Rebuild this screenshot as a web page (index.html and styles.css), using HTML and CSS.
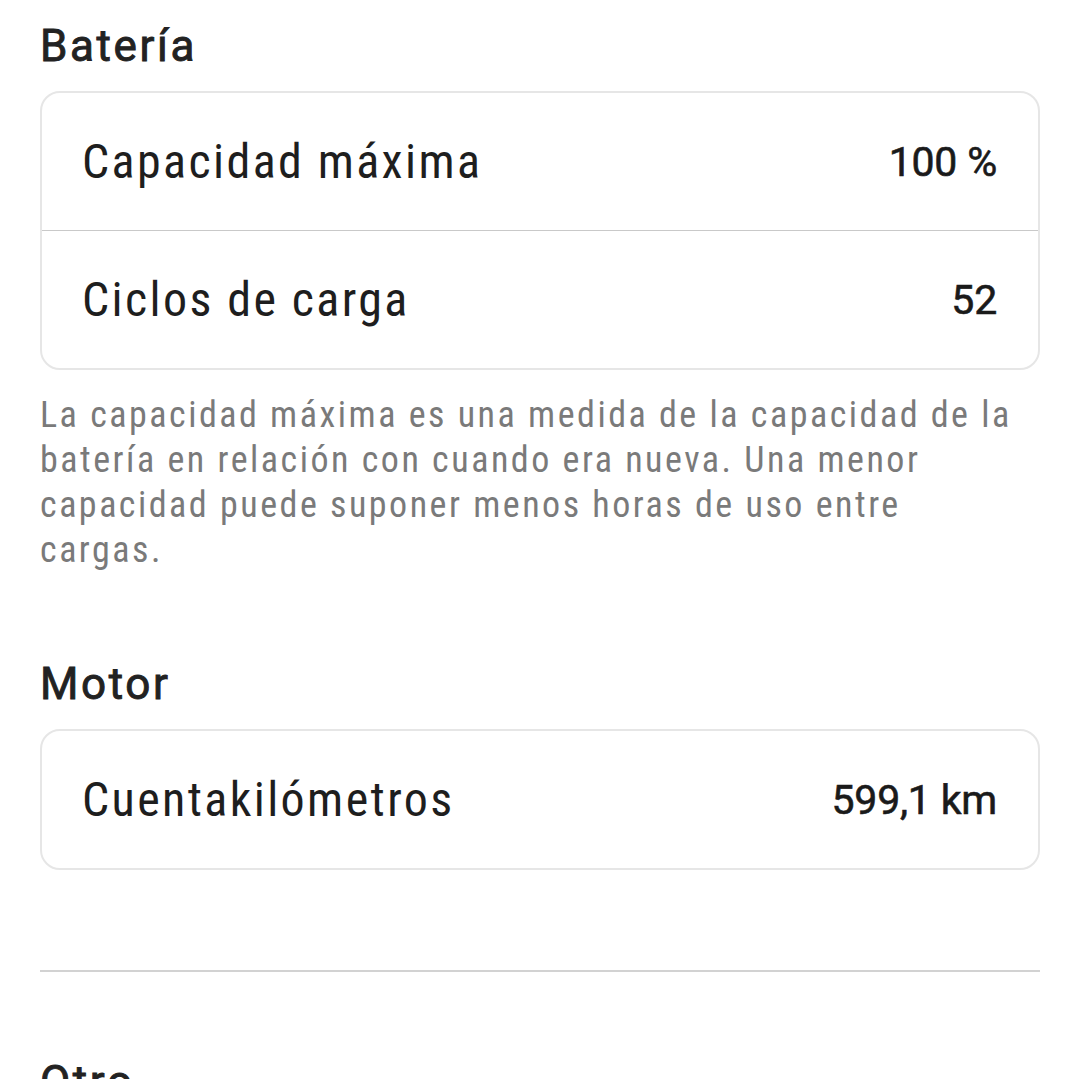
FILE: index.html
```html
<!DOCTYPE html>
<html lang="es">
<head>
    <meta charset="UTF-8">
    <meta name="viewport" content="width=device-width, initial-scale=1.0">
    <title>Información del dispositivo</title>
    <link rel="stylesheet" href="styles.css">
</head>
<body>
    <main class="page">
        <section class="group">
            <h2 class="group-title">Batería</h2>
            <div class="card">
                <div class="row">
                    <span class="label">Capacidad máxima</span>
                    <span class="value">100 %</span>
                </div>
                <div class="row">
                    <span class="label">Ciclos de carga</span>
                    <span class="value">52</span>
                </div>
            </div>
            <p class="note">La capacidad máxima es una medida de la capacidad de la batería en relación con cuando era nueva. Una menor capacidad puede suponer menos horas de uso entre cargas.</p>
        </section>

        <section class="group group-motor">
            <h2 class="group-title">Motor</h2>
            <div class="card">
                <div class="row">
                    <span class="label">Cuentakilómetros</span>
                    <span class="value">599,1 km</span>
                </div>
            </div>
        </section>

        <hr class="separator">

        <section class="group">
            <h2 class="group-title">Otro</h2>
        </section>
    </main>
</body>
</html>
```

FILE: styles.css
```css
body {
    margin: 0;
    padding: 0;
    background: #fff;
    color: #1e1e1e;
    font-family: "Roboto Condensed", Roboto, sans-serif;
}

.page {
    padding: 20px 40px 0;
}

/* medium weight isn't installed, a thin stroke thickens the regular face */
.group-title {
    margin: 0;
    font-family: Roboto, sans-serif;
    font-size: 44px;
    line-height: 53px;
    font-weight: 400;
    color: #222;
    letter-spacing: 2.6px;
    -webkit-text-stroke: 0.9px #222;
}

.card {
    margin-top: 18px;
    border: 2px solid #e6e6e6;
    border-radius: 20px;
}

.row {
    display: flex;
    align-items: center;
    justify-content: space-between;
    height: 137px;
    padding: 0 41px 0 40px;
}

.row + .row {
    border-top: 1px solid #c9c9c9;
}

.label {
    font-size: 48px;
    letter-spacing: 2.4px;
    color: #1e1e1e;
}

.value {
    font-family: Roboto, sans-serif;
    font-size: 41px;
    font-weight: 400;
    color: #1a1a1a;
    letter-spacing: -0.2px;
    -webkit-text-stroke: 0.6px #1a1a1a;
}

.note {
    margin: 23px 20px 0 0;
    font-size: 36px;
    line-height: 45px;
    color: #7a7a7a;
    letter-spacing: 2.5px;
}

.group-motor {
    margin-top: 85px;
}

.separator {
    margin: 100px 0 84px;
    border: 0;
    border-top: 2px solid #d2d2d2;
}
```
